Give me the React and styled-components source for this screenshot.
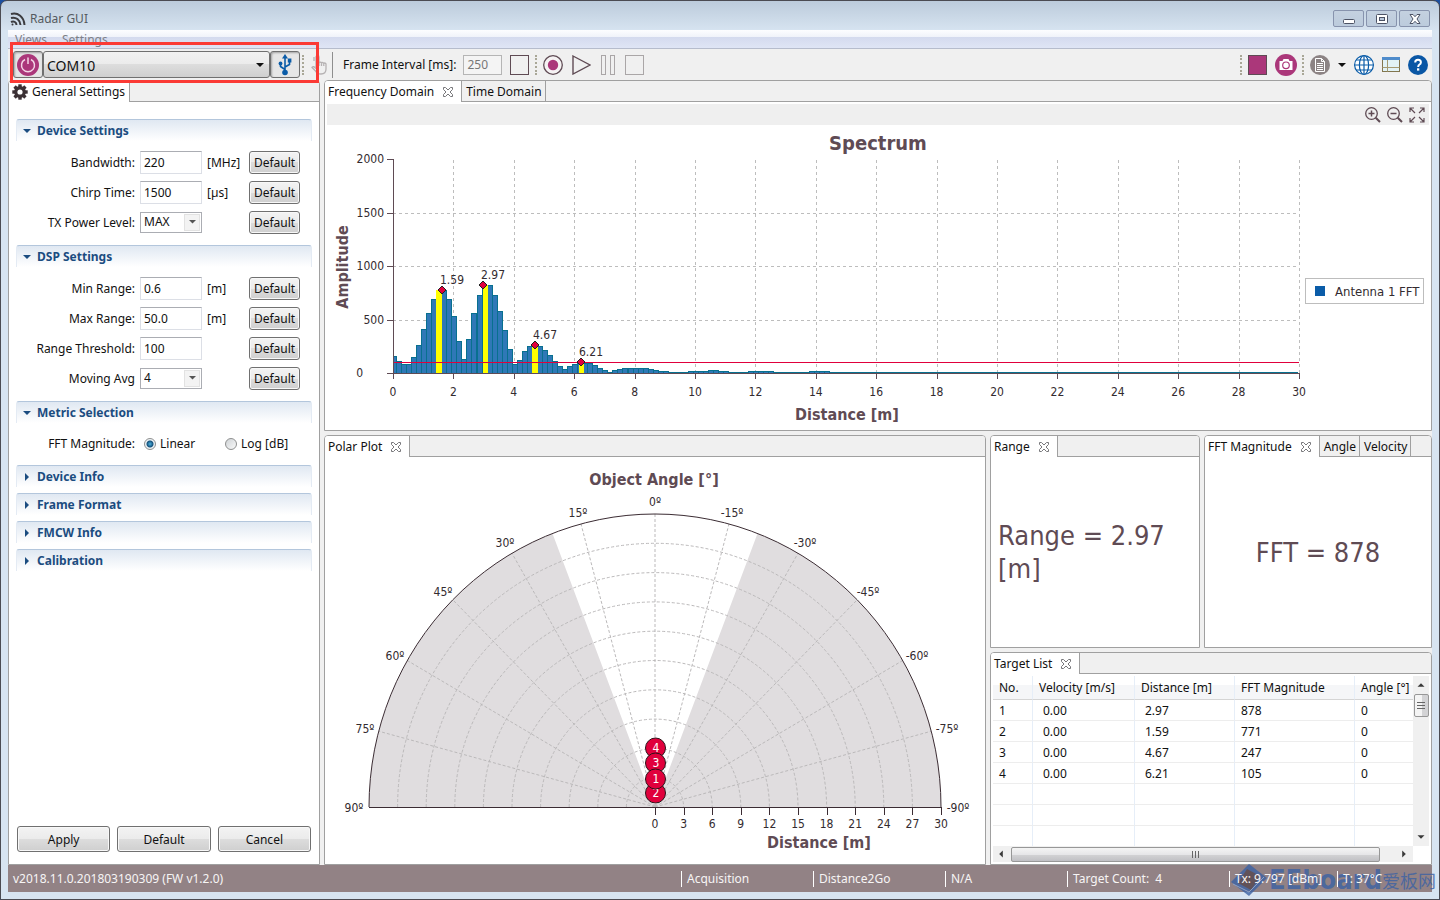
/*==================== EXTERNAL MODULES ====================*/
import React, {useState} from 'react';
import styled, {createGlobalStyle} from 'styled-components';


/*==================== DATA ====================*/
const uiFont = '"Noto Sans", "Open Sans", sans-serif';
const chartFont = '"DejaVu Sans Condensed", "Noto Sans", sans-serif';

const deviceFields = [
  {label: 'Bandwidth:', value: '220', unit: '[MHz]'},
  {label: 'Chirp Time:', value: '1500', unit: '[µs]'},
  {label: 'TX Power Level:', options: ['MAX', 'MID', 'MIN']},
];

const dspFields = [
  {label: 'Min Range:', value: '0.6', unit: '[m]'},
  {label: 'Max Range:', value: '50.0', unit: '[m]'},
  {label: 'Range Threshold:', value: '100'},
  {label: 'Moving Avg', options: ['4', '8', '16']},
];

const targets = [
  {no: 1, velocity: '0.00', distance: '2.97', magnitude: 878, angle: 0},
  {no: 2, velocity: '0.00', distance: '1.59', magnitude: 771, angle: 0},
  {no: 3, velocity: '0.00', distance: '4.67', magnitude: 247, angle: 0},
  {no: 4, velocity: '0.00', distance: '6.21', magnitude: 105, angle: 0},
];

// bar heights in chart units, one for every FFT bin
const bins = [
  12, 9, 9, 16, 28, 44, 60, 74, 83, 83, 74, 57, 32, 14, 34, 60, 78, 88, 88, 78, 62, 43, 24, 9,
  13, 22, 27, 28, 27, 23, 18, 12, 7, 4, 7, 9, 10, 10, 10, 8, 5, 3, 1, 3, 4, 5, 5, 5, 5, 5, 4,
  3, 2, 2, 1, 1, 1, 1, 2, 2, 2, 2, 3, 3, 2, 2, 1, 1, 1, 1, 2, 2, 2, 2, 2, 1, 1, 1, 1, 1, 1, 1, 2, 2, 2, 2,
];

const peaks = [
  {label: '1.59', bar: 43, width: 6, x: 49, y: 83},
  {label: '2.97', bar: 90, width: 5, x: 90, y: 88},
  {label: '4.67', bar: 139, width: 6, x: 142, y: 28},
  {label: '6.21', bar: 186, width: 5, x: 188, y: 11},
];

const angleLabels = [
  ['0º', 0, -301], ['15º', -77, -290], ['-15º', 77, -290], ['30º', -150, -260], ['-30º', 150, -260],
  ['45º', -212, -211], ['-45º', 213, -211], ['60º', -260, -147], ['-60º', 262, -147],
  ['75º', -290, -74], ['-75º', 292, -74], ['90º', -301, 5], ['-90º', 303, 5],
];


/*==================== ICONS ====================*/
const AppIcon = () => (
  <svg width="16" height="16" viewBox="0 0 16 16" fill="none" stroke="#3c3c40" strokeWidth="2">
    <path d="M1 3 C8 1 14 6 14.500 14" />
    <path d="M1 7 C6 5.500 10 9 10.500 14" />
    <path d="M1 11 C4 9.500 6.500 11.500 6.500 14" />
    <circle cx="2.500" cy="13.500" r="1" fill="#3c3c40" stroke="none" />
  </svg>
);

const PowerIcon = () => (
  <svg width="22" height="22" viewBox="0 0 22 22" fill="none">
    <circle cx="11" cy="11" r="11" fill="#ab377a" />
    <path d="M8 5.500 A6.500 6.500 0 1 0 14 5.500" stroke="#f3d5e6" strokeWidth="1.500" />
    <path d="M11 3.500 V10" stroke="#f3d5e6" strokeWidth="1.500" />
  </svg>
);

const UsbIcon = () => (
  <svg width="14" height="22" viewBox="0 0 14 22" fill="none" stroke="#0a5ca8" strokeWidth="1.600">
    <path d="M7 3 V18 M7 15.500 L2.500 12.500 V9.500 M7 13 L11.500 10.500 V7" />
    <path d="M7 0 L10 4.500 H4 Z" fill="#0a5ca8" stroke="none" />
    <circle cx="7" cy="18.500" r="2.800" fill="#0a5ca8" stroke="none" />
    <circle cx="2.500" cy="9.500" r="1.900" fill="#0a5ca8" stroke="none" />
    <rect x="9.800" y="4.500" width="3.600" height="4" fill="#0a5ca8" stroke="none" />
  </svg>
);

const HandIcon = () => (
  <svg width="16" height="21" viewBox="0 0 16 21" fill="none" stroke="#b5b1b2" strokeWidth="1.300">
    <path d="M5 13 V3 a1.500 1.500 0 0 1 3 0 V9 a1.300 1.300 0 0 1 2.500 0 a1.300 1.300 0 0 1 2.300 .6 a1.200 1.200 0 0 1 2.200 .8 V15 q0 5 -5 5 q-4 0 -5.500 -3 L1 13.500 q1.500 -2 4 1" />
    <path d="M8 9 V12 M10.500 10 V12 M12.800 10.500 V12 M3 3 V7" />
  </svg>
);

const RecordIcon = () => (
  <svg width="20" height="20" viewBox="0 0 20 20">
    <circle cx="10" cy="10" r="9.300" fill="#f5f2f3" stroke="#5f4b54" strokeWidth="1.300" />
    <circle cx="10" cy="10" r="5.200" fill="#ab377a" />
  </svg>
);

const PlayIcon = () => (
  <svg width="19" height="20" viewBox="0 0 19 20" fill="none" stroke="#5f4b54" strokeWidth="1.400">
    <path d="M1 1 L18 10 L1 19 Z" />
  </svg>
);

const PauseIcon = () => (
  <svg width="16" height="20" viewBox="-1 0 16 20" fill="none" stroke="#aaa6a7">
    <rect x=".5" y=".5" width="4" height="19" />
    <rect x="9.500" y=".5" width="4" height="19" />
  </svg>
);

const CameraIcon = () => (
  <svg width="22" height="22" viewBox="0 0 22 22">
    <circle cx="11" cy="11" r="11" fill="#ab377a" />
    <path d="M4.500 7 H7.500 L8.500 5 H13.500 L14.500 7 H17.500 V16 H4.500 Z" fill="#fff" />
    <circle cx="11" cy="11.300" r="3.300" fill="none" stroke="#ab377a" strokeWidth="1.200" />
  </svg>
);

const DocumentIcon = () => (
  <svg width="20" height="20" viewBox="0 0 20 20" fill="none">
    <circle cx="10" cy="10" r="10" fill="#8c8384" />
    <path d="M5.500 3.500 H11.500 L14.500 6.500 V16.500 H5.500 Z M11.500 3.500 V6.500 H14.500 M7 8.500 H13 M7 10.500 H13 M7 12.500 H13 M7 14.500 H13" stroke="#fff" />
  </svg>
);

const GlobeIcon = () => (
  <svg width="20" height="20" viewBox="0 0 20 20" fill="#fff" stroke="#0a5ca8" strokeWidth="1.200">
    <circle cx="10" cy="10" r="9.400" />
    <ellipse cx="10" cy="10" rx="4.600" ry="9.400" />
    <path d="M10 .5 V19.500 M.5 10 H19.500 M2.500 5 H17.500 M2.500 15 H17.500" />
  </svg>
);

const LayoutIcon = () => (
  <svg width="18" height="15" viewBox="0 0 18 15" fill="none">
    <rect x=".5" y=".5" width="17" height="14" fill="#e2f3f6" stroke="#82764e" />
    <rect width="18" height="3" fill="#4f8ccb" />
    <path d="M5.500 3 V14.500 M.5 10.500 H17.500" stroke="#a59a72" />
  </svg>
);

const HelpIcon = () => (
  <svg width="20" height="20" viewBox="0 0 20 20" fill="none">
    <circle cx="10" cy="10" r="10" fill="#0a57a5" />
    <path d="M7.200 7.500 Q7.200 4.800 10 4.800 Q12.900 4.800 12.900 7.300 Q12.900 9 11.400 9.600 Q10.200 10.200 10.200 12" stroke="#fff" strokeWidth="2" />
    <rect x="9" y="13.300" width="2.300" height="2.300" fill="#fff" />
  </svg>
);

const GearIcon = () => (
  <svg width="16" height="16" viewBox="-8 -8 16 16">
    {[0, 45, 90, 135].map((turn) => (
      <rect key={turn} x="-1.700" y="-7.700" width="3.400" height="15.400" fill="#3b3034" transform={`rotate(${turn})`} />
    ))}
    <circle r="4.300" fill="none" stroke="#3b3034" strokeWidth="3.200" />
    <circle r="2.600" fill="#fff" />
  </svg>
);

const CloseIcon = () => (
  <svg width="12" height="12" viewBox="0 0 12 12" fill="#fff" stroke="#77777a">
    <path d="M1.500 1.500 H3.500 L6 4 L8.500 1.500 H10.500 V3.500 L8 6 L10.500 8.500 V10.500 H8.500 L6 8 L3.500 10.500 H1.500 V8.500 L4 6 L1.500 3.500 Z" />
  </svg>
);

const ZoomIcon = ({plus}) => (
  <svg width="16" height="16" viewBox="0 0 16 16" fill="none" stroke="#5f4b54" strokeWidth="1.300">
    <circle cx="6.500" cy="6.500" r="5.800" />
    <path d="M10.700 10.700 L15 15" strokeWidth="2" />
    <path d={plus ? 'M3.500 6.500 H9.500 M6.500 3.500 V9.500' : 'M3.500 6.500 H9.500'} strokeWidth="1.500" />
  </svg>
);

const ExpandIcon = () => (
  <svg width="16" height="16" viewBox="0 0 16 16" fill="none" stroke="#5f4b54" strokeWidth="1.200">
    <path d="M1 5 V1 H5 M1 1 L6 6 M11 1 H15 V5 M15 1 L10 6 M15 11 V15 H11 M15 15 L10 10 M5 15 H1 V11 M1 15 L6 10" />
  </svg>
);

const Caret = ({size = 8, color = '#111'}) => (
  <svg width={size} height={size / 2} viewBox="0 0 8 4"><path d="M0 0 H8 L4 4 Z" fill={color} /></svg>
);

const Arrow = ({turn = 0}) => (
  <svg width="8" height="8" viewBox="-4 -4 8 8"><path d="M-3.500 1.800 L0 -1.800 L3.500 1.800 Z" fill="#3a3a3a" transform={`rotate(${turn})`} /></svg>
);


/*==================== COMPONENTS ====================*/
function FieldRow({field}) {
  const id = field.label.replace(/\W/g, '');
  return (
    <Row>
      <RowLabel htmlFor={id}>{field.label}</RowLabel>
      {field.options
        ? <SelectBox>
            <SmallSelect id={id}>{field.options.map((option) => <option key={option}>{option}</option>)}</SmallSelect>
            <SelectArrow><Caret size={7} color="#555" /></SelectArrow>
          </SelectBox>
        : <TextInput id={id} defaultValue={field.value} />}
      <Unit>{field.unit}</Unit>
      <PushButton>Default</PushButton>
    </Row>
  );
}

function Section({title, open, children}) {
  return (
    <SectionBox $open={open}>
      <SectionHeader aria-expanded={!!open}>
        <svg width="10" height="8" viewBox="0 0 10 8">
          <path d={open ? 'M1 2 H9 L5 6 Z' : 'M3 0 L7 4 L3 8 Z'} fill="#1b4c80" />
        </svg>
        {title}
      </SectionHeader>
      {children}
    </SectionBox>
  );
}

function Tabs({active, icon, others = []}) {
  return (
    <TabStrip role="tablist">
      <Tab role="tab" $active>
        {icon}{active}{!icon && <CloseMark><CloseIcon /></CloseMark>}
      </Tab>
      {others.map((name) => <Tab role="tab" key={name}>{name}</Tab>)}
      <TabFill />
    </TabStrip>
  );
}

function SettingsPanel() {
  const [metric, setMetric] = useState('Linear');
  return (
    <Panel>
      <Tabs active="General Settings" icon={<GearIcon />} />
      <SettingsBody>
        <Section title="Device Settings" open>
          {deviceFields.map((field) => <FieldRow key={field.label} field={field} />)}
        </Section>
        <Section title="DSP Settings" open>
          {dspFields.map((field) => <FieldRow key={field.label} field={field} />)}
        </Section>
        <Section title="Metric Selection" open>
          <MetricRow>
            <RowLabel as="span">FFT Magnitude:</RowLabel>
            {['Linear', 'Log [dB]'].map((name) => (
              <RadioLabel key={name}>
                <Radio name="metric" checked={metric === name} onChange={() => setMetric(name)} />{name}
              </RadioLabel>
            ))}
          </MetricRow>
        </Section>
        <Section title="Device Info" />
        <Section title="Frame Format" />
        <Section title="FMCW Info" />
        <Section title="Calibration" />
      </SettingsBody>
      <FormButtons>
        <PushButton $tall>Apply</PushButton>
        <PushButton $tall>Default</PushButton>
        <PushButton $tall>Cancel</PushButton>
      </FormButtons>
    </Panel>
  );
}

function Spectrum() {
  const xTicks = Array.from({length: 16}, (_, i) => i * 2);
  const yTicks = [0, 500, 1000, 1500, 2000];
  const toX = (metres) => Math.round(metres * 30.2) + 0.5;
  const toY = (value) => -Math.round(value * 0.1068) + 0.5;
  return (
    <Chart viewBox="-68 -248 1106 305">
      <ChartTitle x="485" y="-223" $size={20}>Spectrum</ChartTitle>
      <g stroke="#bdbdbd" strokeDasharray="3 3" shapeRendering="crispEdges">
        {xTicks.map((tick) => <path key={tick} d={`M${toX(tick)} 0 V-214`} />)}
        {yTicks.slice(1, 4).map((tick) => <path key={tick} d={`M0 ${toY(tick)} H906`} />)}
      </g>
      <g fill="#2f78b7" stroke="#08708f" shapeRendering="crispEdges">
        <rect x=".5" y="-16.500" width="3" height="17" />
        {Array.from({length: 179}, (_, i) => {
          const height = bins[i] || 1;
          return <rect key={i} x={Math.round(4 + i * 5.033) - 0.5} y={0.5 - height} width="5" height={height} />;
        })}
      </g>
      {peaks.map((peak) => (
        <rect key={peak.label} x={peak.bar} y={-peak.y} width={peak.width} height={peak.y} fill="#ffff00" />
      ))}
      <path d="M0 -10.500 H906" stroke="#e0003c" shapeRendering="crispEdges" />
      <g stroke="#5f4b54" shapeRendering="crispEdges">
        <path d="M.5 -214 V0 M0 .5 H907" />
        {xTicks.map((tick) => <path key={tick} d={`M${toX(tick)} 0 V6`} />)}
        {yTicks.map((tick) => <path key={tick} d={`M-6 ${toY(tick)} H0`} />)}
      </g>
      {peaks.map((peak) => (
        <g key={peak.label}>
          <path d={`M${peak.x} ${-peak.y - 4} l4 4 l-4 4 l-4 -4 Z`} fill="#e0003c" stroke="#222" />
          <ChartText x={peak.x - 2} y={-peak.y - 6} $anchor="start">{peak.label}</ChartText>
        </g>
      ))}
      {xTicks.map((tick) => <ChartText key={tick} x={tick * 30.2} y="23">{tick}</ChartText>)}
      {yTicks.map((tick) => <ChartText key={tick} x={tick ? -9 : -30} y={toY(tick) + 3} $anchor="end">{tick}</ChartText>)}
      <ChartTitle x="454" y="47" $size={16}>Distance [m]</ChartTitle>
      <ChartTitle transform="translate(-45 -106) rotate(-90)" $size={16}>Amplitude</ChartTitle>
      <rect x="912.500" y="-94.500" width="118" height="25" fill="#fff" stroke="#bdbdbd" />
      <rect x="922" y="-87" width="10" height="10" fill="#0a5ca8" />
      <ChartText x="942" y="-77" $size={13} $anchor="start">Antenna 1 FFT</ChartText>
    </Chart>
  );
}

function PolarPlot() {
  const point = (degrees, rx = 286, ry = 293) => {
    const radians = degrees * Math.PI / 180;
    return `${(rx * Math.sin(radians)).toFixed(1)} ${(-ry * Math.cos(radians)).toFixed(1)}`;
  };
  const steps = Array.from({length: 10}, (_, i) => i + 1);
  return (
    <Chart viewBox="-330 -350 660 407">
      <ChartTitle x="-1" y="-322" $size={16}>Object Angle [°]</ChartTitle>
      <path d={`M0 0 L${point(-90)} A286 293 0 0 1 ${point(-21)} Z M0 0 L${point(21)} A286 293 0 0 1 ${point(90)} Z`} fill="#e0dddf" />
      <g fill="none" stroke="#bbb9ba" strokeDasharray="3 2">
        {steps.slice(0, 9).map((step) => (
          <path key={step} d={`M${point(-90, step * 28.6, step * 29.3)} A${step * 28.6} ${step * 29.3} 0 0 1 ${point(90, step * 28.6, step * 29.3)}`} />
        ))}
        {[-75, -60, -45, -30, -15, 0, 15, 30, 45, 60, 75].map((degrees) => (
          <path key={degrees} d={`M0 0 L${point(degrees)}`} />
        ))}
      </g>
      <path d={`M${point(-90)} A286 293 0 0 1 ${point(90)}`} fill="none" stroke="#3b2c33" />
      <path d="M-286 .5 H287" stroke="#3b2c33" />
      {angleLabels.map(([label, x, y]) => <ChartText key={label} x={x} y={y}>{label}</ChartText>)}
      {[0, ...steps].map((step) => (
        <g key={step}>
          <path d={`M${Math.round(step * 28.6) + 0.5} 0 v8`} stroke="#3b2c33" />
          <ChartText x={step * 28.6} y="21">{step * 3}</ChartText>
        </g>
      ))}
      <ChartTitle x="164" y="41" $size={16}>Distance [m]</ChartTitle>
      {[[2, -14], [4, -59], [3, -44], [1, -28]].map(([no, y]) => (
        <g key={no}>
          <circle cx=".5" cy={y} r="10" fill="#e0003c" stroke="#2b1218" />
          <ChartText x="1" y={y + 4} $color="#fff">{no}</ChartText>
        </g>
      ))}
    </Chart>
  );
}

function TargetList() {
  return (
    <ListBody>
      <TableView>
        <Table>
          <colgroup><Col $width={40} /><Col $width={102} /><Col $width={100} /><Col $width={120} /><col /></colgroup>
          <thead>
            <tr><th>No.</th><th>Velocity [m/s]</th><th>Distance [m]</th><th>FFT Magnitude</th><th>Angle [°]</th></tr>
          </thead>
          <tbody>
            {targets.map((target) => (
              <tr key={target.no}>
                <td>{target.no}</td>
                <IndentedCell>{target.velocity}</IndentedCell>
                <IndentedCell>{target.distance}</IndentedCell>
                <td>{target.magnitude}</td>
                <td>{target.angle}</td>
              </tr>
            ))}
            {[5, 6, 7].map((no) => <tr key={no}><td /><td /><td /><td /><td /></tr>)}
          </tbody>
        </Table>
      </TableView>
      <VerticalBar>
        <Arrow /><VerticalThumb><Grip $vertical /></VerticalThumb><BarSpace /><Arrow turn={180} />
      </VerticalBar>
      <HorizontalBar>
        <Arrow turn={-90} /><HorizontalThumb><Grip /></HorizontalThumb><Arrow turn={90} />
      </HorizontalBar>
    </ListBody>
  );
}


/*==================== APP ====================*/
function App() {
  return (
    <Window>
      <GlobalStyle />
      <TitleBar>
        <AppIcon />
        <Title>Radar GUI</Title>
        <WindowButton aria-label="Minimize">
          <svg width="12" height="12" viewBox="0 0 12 12"><rect x=".5" y="6.500" width="11" height="4" rx="1" fill="#fff" stroke="#4c5264" /></svg>
        </WindowButton>
        <WindowButton aria-label="Maximize">
          <svg width="12" height="12" viewBox="0 0 12 12" stroke="#4c5264"><rect x=".5" y="1.500" width="11" height="9" rx="1" fill="#fff" /><rect x="3.500" y="4.500" width="5" height="3" fill="#b9c7da" /></svg>
        </WindowButton>
        <WindowButton aria-label="Close">
          <svg width="12" height="12" viewBox="0 0 12 12" fill="#fff" stroke="#4c5264"><path d="M1 1.500 H4 L6 3.700 L8 1.500 H11 L8 6 L11 10.500 H8 L6 8.300 L4 10.500 H1 L4 6 Z" /></svg>
        </WindowButton>
      </TitleBar>

      <Client>
        <MenuBar><MenuItem>Views</MenuItem><MenuItem>Settings</MenuItem></MenuBar>

        <Toolbar>
          <ToggleButton aria-label="Connect"><PowerIcon /></ToggleButton>
          <PortBox>
            <PortSelect aria-label="Port"><option>COM10</option></PortSelect>
            <SelectArrow $plain><Caret /></SelectArrow>
          </PortBox>
          <ToggleButton aria-label="USB"><UsbIcon /></ToggleButton>
          <Dots />
          <HandButton aria-label="Pointer"><HandIcon /></HandButton>
          <Divider />
          <label htmlFor="interval">Frame Interval [ms]:</label>
          <IntervalInput id="interval" defaultValue="250" disabled />
          <SquareButton aria-label="Single frame" $color="#5f4b54" />
          <Dots $gap={6} />
          <RunButtons>
            <IconButton aria-label="Record"><RecordIcon /></IconButton>
            <IconButton aria-label="Play"><PlayIcon /></IconButton>
            <IconButton aria-label="Pause"><PauseIcon /></IconButton>
            <SquareButton aria-label="Stop" $color="#aaa6a7" />
          </RunButtons>
          <Tools>
            <Dots />
            <SquareButton aria-label="Colour" $color="#5f4b54" $fill="#ab377a" />
            <IconButton aria-label="Screenshot"><CameraIcon /></IconButton>
            <Dots />
            <IconButton aria-label="Log"><DocumentIcon /></IconButton>
            <IconButton aria-label="Log options"><Caret /></IconButton>
            <IconButton aria-label="Website"><GlobeIcon /></IconButton>
            <IconButton aria-label="Layout"><LayoutIcon /></IconButton>
            <IconButton aria-label="Help"><HelpIcon /></IconButton>
          </Tools>
        </Toolbar>

        <Workspace>
          <SettingsPanel />
          <Views>
            <Panel>
              <Tabs active="Frequency Domain" others={['Time Domain']} />
              <ChartTools>
                <IconButton aria-label="Zoom in"><ZoomIcon plus /></IconButton>
                <IconButton aria-label="Zoom out"><ZoomIcon /></IconButton>
                <IconButton aria-label="Fit"><ExpandIcon /></IconButton>
              </ChartTools>
              <Spectrum />
            </Panel>
            <LowerViews>
              <Panel>
                <Tabs active="Polar Plot" />
                <PolarPlot />
              </Panel>
              <Readouts>
                <MetricPanels>
                  <Panel>
                    <Tabs active="Range" />
                    <Reading>Range = 2.97 [m]</Reading>
                  </Panel>
                  <Panel>
                    <Tabs active="FFT Magnitude" others={['Angle', 'Velocity']} />
                    <Reading $center>FFT = 878</Reading>
                  </Panel>
                </MetricPanels>
                <Panel>
                  <Tabs active="Target List" />
                  <TargetList />
                </Panel>
              </Readouts>
            </LowerViews>
          </Views>
        </Workspace>

        <StatusBar>
          <Version>v2018.11.0.201803190309 (FW v1.2.0)</Version>
          <StatusItem $width={132}>Acquisition</StatusItem>
          <StatusItem $width={132}>Distance2Go</StatusItem>
          <StatusItem $width={122}>N/A</StatusItem>
          <StatusItem $width={162}>Target Count:&nbsp; 4</StatusItem>
          <StatusItem $width={108}>Tx: 9.797 [dBm]</StatusItem>
          <StatusItem $width={95}>T: 37°C</StatusItem>
        </StatusBar>
      </Client>

      <Highlight />
      <Watermark>
        <svg width="36" height="32" viewBox="0 0 36 32">
          <path d="M18 0 L36 14 L18 32 L0 18 Z" fill="#3c62a4" />
          <path d="M16 5 L29 12 L20 26 L7 19 Z" fill="#56474f" />
          <path d="M2 20 L18 28 L33 13" fill="none" stroke="#8fa9d2" />
        </svg>
        <Brand>EEboard</Brand>
        <BrandName>爱板网</BrandName>
      </Watermark>
    </Window>
  );
}


/*==================== EXPORTS ====================*/
export default App;


/*==================== STYLES ====================*/
const GlobalStyle = createGlobalStyle`
  * { box-sizing: border-box; }
  body {
    margin: 0;
    background: #1c4fa0;
    color: #111;
    font: 12px/16px ${uiFont};
  }
  button, input, select { font: inherit; color: inherit; }
  button { padding: 0; }
  svg { display: block; flex: none; }
`;

const Window = styled.div`
  position: relative;
  display: flex;
  flex-direction: column;
  height: 100vh;
  padding: 0 7px 7px;
  overflow: hidden;
  border: 1px solid #4b4b52;
  border-radius: 7px 7px 0 0;
  background: linear-gradient(#bccbdb, #d7e4f1 30px);
`;

const TitleBar = styled.header`
  display: flex;
  align-items: center;
  height: 29px;
  padding: 6px 2px 0;
`;

const Title = styled.h1`
  flex: 1;
  margin: 0 0 0 4px;
  color: #555a60;
  font-size: 12px;
  font-weight: 400;
`;

const WindowButton = styled.button`
  display: flex;
  align-items: center;
  justify-content: center;
  width: 31px;
  height: 17px;
  margin-left: 2px;
  border: 1px solid #8793ad;
  border-radius: 2px;
  background: linear-gradient(#c4d1e0, #bccbdc);
`;

const Client = styled.div`
  display: flex;
  flex: 1;
  flex-direction: column;
  min-height: 0;
  background: #f0f0f0;
`;

const MenuBar = styled.nav`
  display: flex;
  align-items: center;
  height: 19px;
  gap: 15px;
  padding: 2px 7px 0;
  border-bottom: 1px solid #b6bccc;
  background: linear-gradient(#fdfdff, #f0f3fa 7px, #d4daee 7px, #dfe5f5);
`;

const MenuItem = styled.button`
  border: 0;
  background: none;
  color: #7c7f88;
`;

const Toolbar = styled.div`
  display: flex;
  align-items: center;
  height: 31px;
  padding: 0 4px 0 5px;
`;

const ToggleButton = styled.button`
  display: flex;
  align-items: center;
  justify-content: center;
  width: 30px;
  height: 27px;
  border: 1px solid #6f6f6f;
  border-radius: 3px;
  background: #e6e6e6;
  box-shadow: inset 1px 1px 2px #a5a5a5;
`;

const SelectBox = styled.div`
  display: grid;
  align-items: center;
`;

const PortBox = styled(SelectBox)`
  width: 227px;
`;

const PortSelect = styled.select`
  grid-area: 1 / 1;
  height: 27px;
  padding: 2px 3px 0;
  appearance: none;
  border: 1px solid #707070;
  border-radius: 3px;
  background: linear-gradient(#f2f2f2, #ebebeb 50%, #dddddd 50%, #cfcfcf);
  font-size: 14px;
`;

const SelectArrow = styled.span`
  display: flex;
  grid-area: 1 / 1;
  align-items: center;
  justify-content: center;
  justify-self: end;
  width: 16px;
  height: 17px;
  margin-right: 2px;
  border: 1px solid ${({$plain}) => ($plain ? 'transparent' : '#e2e2e2')};
  background: ${({$plain}) => ($plain ? 'none' : '#f3f3f3')};
  pointer-events: none;
`;

const Dots = styled.span`
  flex: none;
  height: 20px;
  margin: 0 ${({$gap = 2}) => $gap}px;
  border-left: 2px dotted #a9a797;
`;

const IconButton = styled.button`
  border: 0;
  background: none;
`;

const HandButton = styled(IconButton)`
  margin: 0 5px;
`;

const Divider = styled.span`
  height: 26px;
  margin-right: 10px;
  border-left: 1px solid #8e8e8e;
`;

const TextInput = styled.input`
  width: 62px;
  height: 23px;
  padding: 0 3px;
  border: 1px solid #dcdfe6;
  border-top-color: #abadb3;
`;

const IntervalInput = styled(TextInput)`
  width: 39px;
  height: 20px;
  margin: 0 8px 0 7px;
  border-color: #b5b5b5;
  background: #f4f4f4;
  color: #777;
`;

const SquareButton = styled.button`
  width: 19px;
  height: 20px;
  border: 1px solid ${({$color}) => $color};
  background: ${({$fill}) => $fill || 'none'};
`;

const RunButtons = styled.div`
  display: flex;
  align-items: center;
  gap: 9px;
`;

const Tools = styled.div`
  display: flex;
  align-items: center;
  gap: 8px;
  margin-left: auto;

  ${Dots} { margin: 0 -2px 0 -3px; }
`;

const Workspace = styled.main`
  display: grid;
  flex: 1;
  grid-template-columns: 312px minmax(0, 1fr);
  gap: 4px;
  min-height: 0;
`;

const Panel = styled.section`
  display: flex;
  flex-direction: column;
  min-width: 0;
  min-height: 0;
  overflow: hidden;
  border: 1px solid #a0a0a0;
  border-radius: 4px 4px 0 0;
  background: #fff;
`;

const TabStrip = styled.div`
  display: flex;
  flex: none;
  height: 21px;
`;

const Tab = styled.button`
  display: flex;
  align-items: center;
  gap: 4px;
  padding: ${({$active}) => ($active ? '0 4px 0 3px' : '2px 3px 0 4px')};
  border: solid #a0a0a0;
  border-width: ${({$active}) => ($active ? '0 1px 0 0' : '0 1px 1px 0')};
  background: ${({$active}) => ($active ? '#fff' : '#f0f0f0')};
  white-space: nowrap;
`;

const CloseMark = styled.span`
  padding: 0 3px 0 4px;
`;

const TabFill = styled.span`
  flex: 1;
  border-bottom: 1px solid #a0a0a0;
  background: #f0f0f0;
`;

const SettingsBody = styled.form`
  flex: 1;
  padding: 17px 7px 0;
`;

const SectionBox = styled.section`
  padding-bottom: ${({$open}) => ($open ? '8px' : '0')};
`;

const SectionHeader = styled.button.attrs({type: 'button'})`
  display: flex;
  align-items: center;
  gap: 5px;
  width: 100%;
  height: 22px;
  margin-bottom: 6px;
  padding: 0 5px;
  border: 1px solid #e4ebf4;
  border-top-color: #b3c6dc;
  border-bottom: 0;
  border-radius: 3px 3px 0 0;
  background: linear-gradient(#e0e8f2, #fff);
  color: #1b4c80;
  font-weight: 700;
`;

const Row = styled.div`
  display: grid;
  grid-template-columns: 119px 62px 37px 51px;
  align-items: center;
  column-gap: 5px;
  height: 30px;
`;

const RowLabel = styled.label`
  padding-top: 2px;
  text-align: right;
`;

const Unit = styled.span`
  padding-top: 2px;
`;

const MetricRow = styled.div`
  display: grid;
  grid-template-columns: 119px 76px 80px;
  align-items: center;
  column-gap: 5px;
  height: 28px;
`;

const RadioLabel = styled.label`
  display: flex;
  align-items: center;
  gap: 4px;
  padding: 2px 0 0 4px;
`;

const Radio = styled.input.attrs({type: 'radio'})`
  width: 12px;
  height: 12px;
  margin: 0;
  appearance: none;
  border: 1px solid #8e8f8f;
  border-radius: 50%;
  background: linear-gradient(135deg, #cfd3d6, #fafafa);

  &:checked {
    background: radial-gradient(circle, #4fb3e0 0, #16527c 3px, #eef3f6 4px);
  }
`;

const SmallSelect = styled.select`
  grid-area: 1 / 1;
  height: 21px;
  padding: 0 3px;
  appearance: none;
  border: 1px solid #abadb3;
  background: #fff;
`;

const PushButton = styled.button.attrs({type: 'button'})`
  flex: 1;
  height: ${({$tall}) => ($tall ? '26px' : '23px')};
  padding-top: 1px;
  border: 1px solid #707070;
  border-radius: 3px;
  background: linear-gradient(#f3f3f3, #ebebeb 50%, #dddddd 50%, #cfcfcf);
  box-shadow: inset 0 0 0 1px #f8f8f8;
`;

const FormButtons = styled.div`
  display: flex;
  gap: 7px;
  padding: 0 8px 12px;
`;

const Views = styled.div`
  display: grid;
  grid-template-rows: minmax(0, 351fr) minmax(0, 430fr);
  gap: 4px;
  min-height: 0;
`;

const LowerViews = styled.div`
  display: grid;
  grid-template-columns: minmax(0, 331fr) minmax(0, 221fr);
  gap: 4px;
  min-height: 0;
`;

const Readouts = styled.div`
  display: grid;
  grid-template-rows: minmax(0, 1fr) minmax(0, 1fr);
  gap: 4px;
  min-height: 0;
`;

const MetricPanels = styled.div`
  display: grid;
  grid-template-columns: minmax(0, 35fr) minmax(0, 38fr);
  gap: 4px;
  min-height: 0;
`;

const ChartTools = styled.div`
  display: flex;
  align-items: center;
  justify-content: flex-end;
  gap: 6px;
  height: 21px;
  margin: 2px 2px 0;
  padding-right: 4px;
  background: #efefef;
`;

const Chart = styled.svg`
  flex: 1;
  width: 100%;
  min-height: 0;
`;

const ChartText = styled.text`
  fill: ${({$color}) => $color || '#332b2f'};
  font: ${({$size = 12}) => $size}px ${chartFont};
  text-anchor: ${({$anchor}) => $anchor || 'middle'};
`;

const ChartTitle = styled.text`
  fill: #5f4b54;
  font: 700 ${({$size}) => $size}px ${chartFont};
  text-anchor: middle;
`;

const Reading = styled.p`
  display: flex;
  flex: 1;
  align-items: center;
  justify-content: ${({$center}) => ($center ? 'center' : 'flex-start')};
  margin: 0;
  padding: 0 7px;
  color: #5f4b54;
  font: 27px/33px ${chartFont};
`;

const ListBody = styled.div`
  display: grid;
  flex: 1;
  grid-template-columns: minmax(0, 1fr) 16px;
  grid-template-rows: minmax(0, 1fr) 16px;
  min-height: 0;
  padding: 2px;
`;

const TableView = styled.div`
  overflow: hidden;
`;

const Table = styled.table`
  width: 100%;
  border-collapse: separate;
  border-spacing: 0;
  table-layout: fixed;

  th, td {
    height: 21px;
    padding: 0 0 0 6px;
    border-right: 1px solid #e6eef8;
    border-bottom: 1px solid #ededed;
    text-align: left;
    white-space: nowrap;
  }
  td { padding-top: 2px; }
  th {
    height: 24px;
    border-bottom-color: #d5d5d5;
    background: linear-gradient(#fff 40%, #f5f6f8 40%);
    font-weight: 400;
  }
  th:last-child, td:last-child { border-right: 0; }
`;

const Col = styled.col`
  width: ${({$width}) => $width}px;
`;

const IndentedCell = styled.td`
  && { padding-left: 10px; }
`;

const VerticalBar = styled.div`
  display: flex;
  flex-direction: column;
  align-items: center;
  gap: 5px;
  padding: 5px 0;
  background: #f0f0f0;
`;

const BarSpace = styled.span`
  flex: 1;
`;

const Thumb = styled.div`
  display: flex;
  align-items: center;
  justify-content: center;
  border: 1px solid #979797;
  border-radius: 2px;
`;

const VerticalThumb = styled(Thumb)`
  width: 15px;
  height: 23px;
  background: linear-gradient(90deg, #f4f4f4 50%, #d3d3d5 50%);
`;

const HorizontalThumb = styled(Thumb)`
  flex: 1;
  height: 15px;
  margin-right: 14px;
  background: linear-gradient(#f4f4f4, #e6e6e8 50%, #d3d3d5 50%, #c0c0c4);
`;

const Grip = styled.span`
  width: 8px;
  height: 7px;
  background: repeating-linear-gradient(${({$vertical}) => ($vertical ? '180deg' : '90deg')}, #666 0 1px, transparent 1px 3px);
`;

const HorizontalBar = styled.div`
  display: flex;
  align-items: center;
  gap: 6px;
  padding: 0 5px 0 4px;
  background: #f0f0f0;
`;

const StatusBar = styled.footer`
  display: flex;
  flex: none;
  align-items: center;
  height: 27px;
  background: #928285;
  color: #f7f5f5;
`;

const Version = styled.span`
  flex: 1;
  padding-left: 5px;
`;

// keeps the readings above the watermark
const StatusItem = styled.span`
  position: relative;
  z-index: 1;
  width: ${({$width}) => $width}px;
  padding-left: 5px;
  border-left: 1px solid #fff;
  white-space: nowrap;
`;

const Highlight = styled.div`
  position: absolute;
  top: 41px;
  left: 9px;
  width: 309px;
  height: 41px;
  border: 3px solid #fb3a35;
  pointer-events: none;
`;

const Watermark = styled.div`
  position: absolute;
  right: 3px;
  bottom: 3px;
  display: flex;
  align-items: center;
  color: #3c62a4;
  opacity: .8;
  pointer-events: none;
`;

const Brand = styled.span`
  margin-left: 2px;
  font: 700 27px/32px "DejaVu Sans Condensed", sans-serif;
`;

const BrandName = styled.span`
  font: 18px/32px "Noto Sans CJK SC", sans-serif;
`;
